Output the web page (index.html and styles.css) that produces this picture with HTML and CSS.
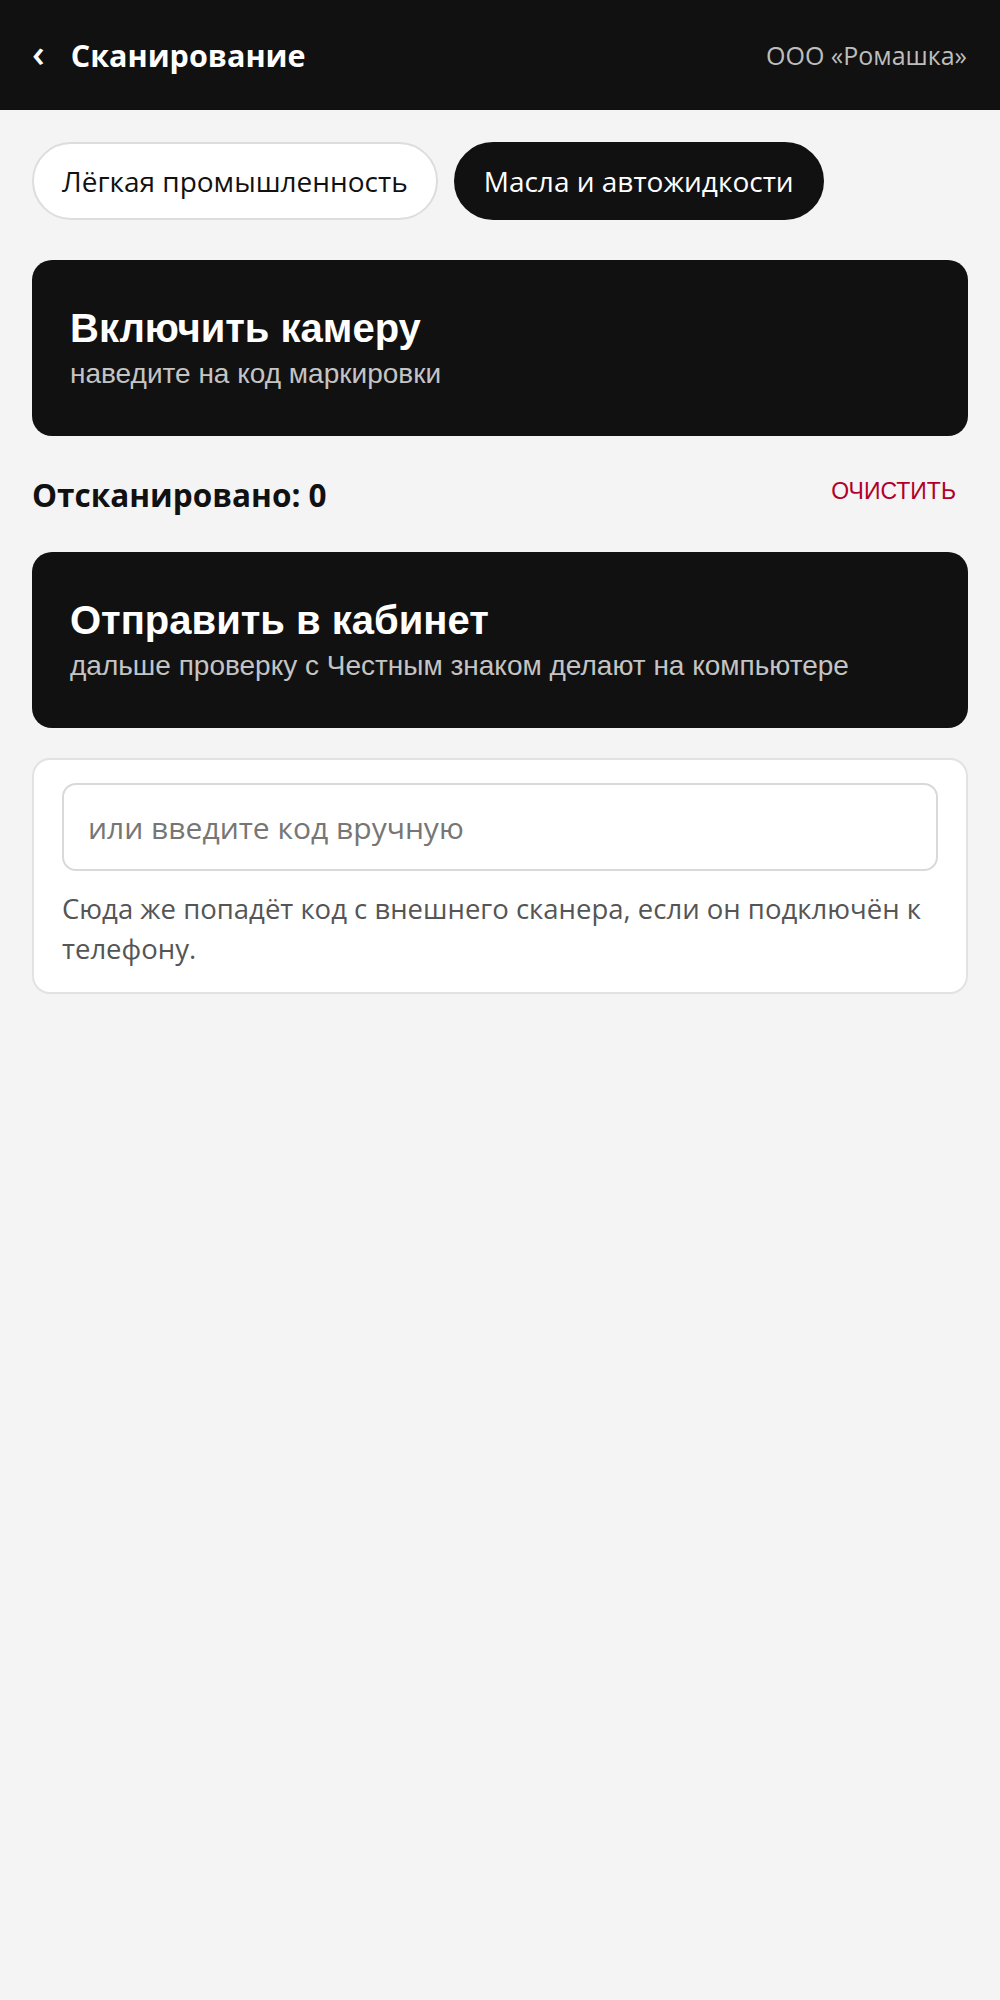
FILE: index.html
```html
<!DOCTYPE html>
<html lang="ru">
<head>
  <meta charset="UTF-8" />
  <meta name="viewport" content="width=device-width, initial-scale=1.0" />
  <title>Сканирование</title>
  <link rel="stylesheet" href="styles.css">
</head>
<body>
  <header class="topbar">
    <div class="topbar-left">
      <button class="back-btn" type="button">‹</button>
      <h1 class="topbar-title">Сканирование</h1>
    </div>
    <div class="org-name">ООО «Ромашка»</div>
  </header>

  <main class="content">
    <!-- Выбор товарной группы -->
    <div class="chips">
      <button class="chip" type="button">Лёгкая промышленность</button>
      <button class="chip active" type="button">Масла и автожидкости</button>
    </div>

    <button class="action-card" type="button">
      <span class="action-title">Включить камеру</span>
      <span class="action-sub">наведите на код маркировки</span>
    </button>

    <div class="counter-row">
      <div class="counter">Отсканировано: 0</div>
      <button class="clear-btn" type="button">ОЧИСТИТЬ</button>
    </div>

    <button class="action-card" type="button">
      <span class="action-title">Отправить в кабинет</span>
      <span class="action-sub">дальше проверку с Честным знаком делают на компьютере</span>
    </button>

    <!-- Ручной ввод -->
    <div class="manual-box">
      <input class="manual-input" type="text" placeholder="или введите код вручную">
      <p class="manual-hint">Сюда же попадёт код с внешнего сканера, если он подключён к телефону.</p>
    </div>
  </main>
</body>
</html>
```

FILE: styles.css
```css
body {
  margin: 0;
  font-family: "Open Sans", sans-serif;
  background-color: #f4f4f4;
  color: #111;
}

.topbar {
  height: 110px;
  background-color: #111;
  color: white;
  display: flex;
  align-items: center;
  justify-content: space-between;
  padding: 0 33px 0 32px;
}

.topbar-left {
  display: flex;
  align-items: center;
  gap: 26px;
}

.back-btn {
  background: none;
  border: none;
  color: white;
  font-family: "Open Sans", sans-serif;
  font-size: 38px;
  font-weight: 600;
  padding: 0 0 6px 0;
  line-height: 1;
  cursor: pointer;
}

.topbar-title {
  margin: 0;
  font-size: 30.5px;
  font-weight: 700;
}

.org-name {
  font-size: 25px;
  color: #bdbdbd;
}

.content {
  padding: 32px;
  display: flex;
  flex-direction: column;
}

.chips {
  display: flex;
  gap: 16px;
  margin-bottom: 40px;
}

.chip {
  height: 78px;
  padding: 0 28px;
  border-radius: 39px;
  border: 2px solid #dddddd;
  background-color: white;
  color: #111;
  font-family: "Open Sans", sans-serif;
  font-size: 28px;
  cursor: pointer;
}

.chip.active {
  background-color: #111;
  border-color: #111;
  color: white;
}

.action-card {
  display: flex;
  flex-direction: column;
  align-items: flex-start;
  justify-content: center;
  height: 176px;
  padding: 0 38px;
  border: none;
  border-radius: 20px;
  background-color: #111;
  color: white;
  font-family: "Liberation Sans", Arial, sans-serif;
  text-align: left;
  cursor: pointer;
}

.action-title {
  font-size: 40px;
  font-weight: 700;
  line-height: 1.2;
}

.action-sub {
  margin-top: 4px;
  font-size: 28px;
  color: #c4c4c4;
  line-height: 1.3;
}

.counter-row {
  display: flex;
  align-items: center;
  justify-content: space-between;
  height: 116px;
}

.counter {
  font-size: 31.5px;
  font-weight: 700;
}

.clear-btn {
  background: none;
  border: none;
  color: #b0002a;
  font-family: "Liberation Sans", Arial, sans-serif;
  font-size: 23px;
  padding: 0 12px 6px;
  cursor: pointer;
}

.manual-box {
  margin-top: 30px;
  background-color: white;
  border: 2px solid #e2e2e2;
  border-radius: 18px;
  padding: 23px 28px 24px;
}

.manual-input {
  box-sizing: border-box;
  width: 100%;
  height: 88px;
  padding: 0 24px;
  border: 2px solid #d9d9d9;
  border-radius: 14px;
  font-family: "Open Sans", sans-serif;
  font-size: 30px;
  color: #111;
  outline: none;
}

.manual-input::placeholder {
  color: #767676;
}

.manual-hint {
  margin: 18px 0 0;
  font-size: 27.5px;
  line-height: 1.44;
  color: #555;
}
```
